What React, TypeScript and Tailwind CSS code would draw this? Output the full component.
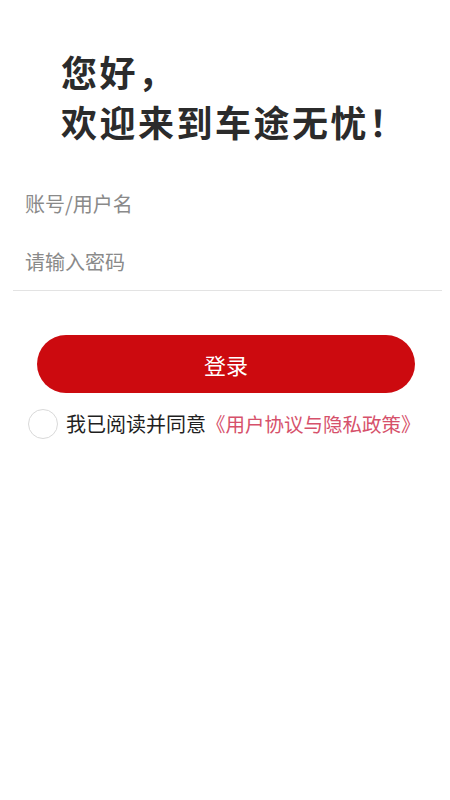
import React from "react";

export default function App() {
  const font = { fontFamily: '"Noto Sans CJK SC", "Noto Sans", sans-serif' };
  return (
    <div className="w-[450px] h-[800px] bg-white flex flex-col" style={font}>
      <div className="pl-[61px] pt-[46px] text-[36px] leading-[50px] font-bold text-[#2b2b2b] tracking-[2.5px]">
        <div>您好，</div>
        <div>欢迎来到车途无忧！</div>
      </div>
      <div className="mt-[28px] flex flex-col">
        <div className="h-[60px] flex items-center px-[25px]">
          <input
            className="w-full outline-none bg-transparent text-[20px] text-[#333] placeholder:text-[#8a8a8a]"
            placeholder="账号/用户名"
          />
        </div>
        <div className="h-[56px] flex items-center px-[25px]">
          <input
            type="password"
            className="w-full outline-none bg-transparent text-[20px] text-[#333] placeholder:text-[#8a8a8a]"
            placeholder="请输入密码"
          />
        </div>
        <div className="ml-[13px] mr-[8px] h-px bg-[#e3e3e3]" />
      </div>
      <button className="mt-[44px] ml-[37px] mr-[35px] h-[58px] rounded-full bg-[#cc0a0f] text-white text-[22px] flex items-center justify-center">
        登录
      </button>
      <div className="mt-[16px] ml-[28px] flex items-center">
        <div className="w-[30px] h-[30px] rounded-full border-[1.5px] border-[#d9d9d9] bg-white" />
        <span className="ml-[8px] text-[20px] text-[#1f1f1f]">我已阅读并同意</span>
        <span className="text-[19.5px] text-[#d6516b]">《用户协议与隐私政策》</span>
      </div>
    </div>
  );
}
